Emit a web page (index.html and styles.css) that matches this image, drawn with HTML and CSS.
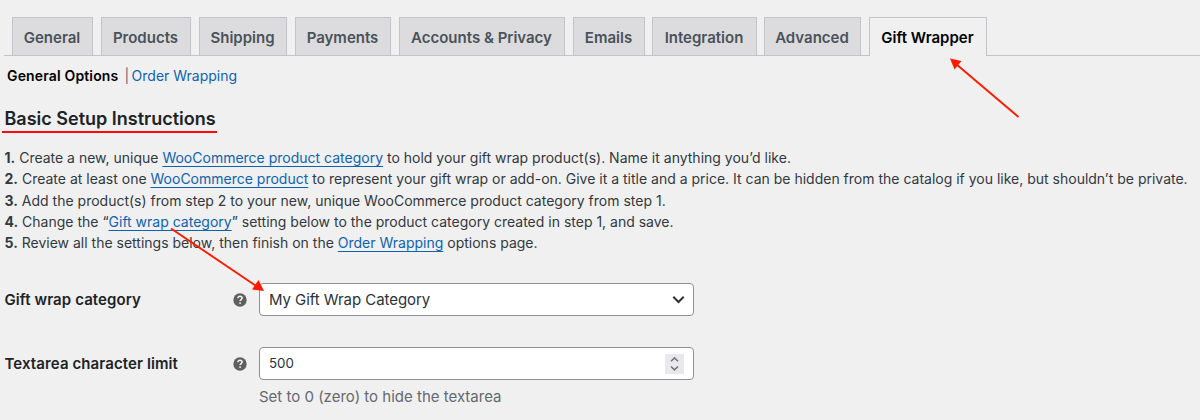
FILE: index.html
```html
<!DOCTYPE html>
<html lang="en">
<head>
<meta charset="utf-8">
<title>Gift Wrapper settings</title>
<link rel="stylesheet" href="styles.css">
</head>
<body>
<nav class="tabs">
  <a class="tab"><span>General</span></a>
  <a class="tab"><span>Products</span></a>
  <a class="tab"><span>Shipping</span></a>
  <a class="tab"><span>Payments</span></a>
  <a class="tab"><span>Accounts &amp; Privacy</span></a>
  <a class="tab tight"><span>Emails</span></a>
  <a class="tab tight"><span>Integration</span></a>
  <a class="tab"><span>Advanced</span></a>
  <a class="tab active"><span>Gift Wrapper</span></a>
</nav>
<main>
  <div class="sections"><b>General Options</b><span class="divider">|</span><a>Order Wrapping</a></div>
  <h2><span>Basic Setup Instructions</span></h2>
  <div class="steps">
    <div class="step"><b>1.</b> Create a new, unique <a>WooCommerce product category</a> to hold your gift wrap product(s). Name it anything you’d like.</div>
    <div class="step"><b>2.</b> Create at least one <a>WooCommerce product</a> to represent your gift wrap or add-on. Give it a title and a price. It can be hidden from the catalog if you like, but shouldn’t be private.</div>
    <div class="step"><b>3.</b> Add the product(s) from step 2 to your new, unique WooCommerce product category from step 1.</div>
    <div class="step"><b>4.</b> Change the “<a>Gift wrap category</a>” setting below to the product category created in step 1, and save.</div>
    <div class="step"><b>5.</b> Review all the settings below, then finish on the <a>Order Wrapping</a> options page.</div>
  </div>
  <div class="row">
    <label>Gift wrap category</label>
    <svg class="help" viewBox="0 0 14 14"><circle cx="7" cy="7" r="6.7" fill="#5f5f5f"/><path d="M4.9 5.3C4.9 4 5.8 3.3 7 3.3s2.1.7 2.1 1.8c0 1.4-2 1.5-2 3" fill="none" stroke="#f4f4f4" stroke-width="1.5"/><rect x="6.3" y="9.3" width="1.6" height="1.6" fill="#f4f4f4"/></svg>
    <div class="field select"><span>My Gift Wrap Category</span><svg width="14" height="9" viewBox="0 0 14 9"><path d="M2.3 1.8 7.5 7l5.2-5.2" fill="none" stroke="#2c3338" stroke-width="2"/></svg></div>
  </div>
  <div class="row second">
    <label>Textarea character limit</label>
    <svg class="help" viewBox="0 0 14 14"><circle cx="7" cy="7" r="6.7" fill="#5f5f5f"/><path d="M4.9 5.3C4.9 4 5.8 3.3 7 3.3s2.1.7 2.1 1.8c0 1.4-2 1.5-2 3" fill="none" stroke="#f4f4f4" stroke-width="1.5"/><rect x="6.3" y="9.3" width="1.6" height="1.6" fill="#f4f4f4"/></svg>
    <div class="field number"><span>500</span><svg width="19" height="20" viewBox="0 0 19 20"><rect width="19" height="20" fill="#e9e9ed"/><path d="M6 7.3 9.5 3.9 13 7.3M6 12.5 9.5 15.9 13 12.5" fill="none" stroke="#74747c" stroke-width="1.5"/></svg></div>
  </div>
  <p class="hint">Set to 0 (zero) to hide the textarea</p>
</main>
<svg class="arrows" width="1200" height="420" viewBox="0 0 1200 420">
  <g stroke="#ff1a00" stroke-width="1.9"><path d="M1018.500 117 956 64"/><path d="M171 228.500 257 286.500"/></g>
  <g fill="#ff1a00"><path d="M950 58.500 961.500 61 954.500 69.500Z"/><path d="M264 291 252 289.500 258.500 280Z"/></g>
</svg>
</body>
</html>
```
FILE: styles.css
```css
* { box-sizing: border-box; }
body {
  margin: 0;
  width: 1200px;
  height: 420px;
  overflow: hidden;
  background: #f0f0f1;
  color: #32393f;
  font: 14px/21px Inter, sans-serif;
}
.tabs {
  display: grid;
  grid-template-columns: 89px 98px 96px 104px 174px 79px 112px 105px 118px;
  height: 56px;
  margin-left: 4px;
  padding: 17px 0 0 8px;
  border-bottom: 1px solid #c3c4c7;
}
.tab {
  display: flex;
  align-items: center;
  justify-content: center;
  height: 38px;
  margin-right: 8px;
  padding-top: 1px;
  border: 1px solid #c3c4c7;
  border-bottom: 0;
  background: #dcdcde;
  color: #4a525a;
  font-size: 15px;
  font-weight: 600;
  white-space: nowrap;
}
.tab span { margin-left: -1px; }
.tight { margin-right: 7px; }
.active {
  height: 39px;
  margin-right: 0;
  padding-bottom: 1px;
  background: #f0f0f1;
  color: #000;
}
main { padding: 8px 5px 0; }
.sections {
  display: flex;
  height: 22px;
  padding-left: 2px;
  align-items: center;
}
.sections b { color: #000; font-weight: 600; letter-spacing: 0.15px; }
.divider { margin: 0 2.5px 0 6px; color: #646970; }
.sections a, .steps a { color: #0e63b0; }
.steps { margin-left: -0.5px; padding-top: 14px; }
.steps a { text-decoration: underline; text-underline-offset: 3px; text-decoration-thickness: 1px; }
h2 {
  width: 215px;
  height: 27px;
  margin: 20px 0 0 -3px;
  padding: 1px 0 0 2.5px;
  border-bottom: 2px solid #fb0d0d;
  color: #1d2327;
  font-size: 18px;
  font-weight: 600;
  line-height: 24px;
  white-space: nowrap;
}
.step { height: 21.3px; white-space: nowrap; }
.step b { font-weight: 700; }
.row {
  display: grid;
  grid-template-columns: 228px 26px 435px;
  align-items: center;
  height: 32px;
  margin-top: 30px;
}
.second { margin-top: 32px; }
label {
  margin-left: -0.5px;
  color: #1d2327;
  font-size: 15px;
  font-weight: 600;
  letter-spacing: 0.1px;
}
.help { width: 14px; height: 14px; }
.field {
  display: flex;
  align-items: center;
  justify-content: space-between;
  height: 33px;
  padding: 0 8px 0 9px;
  border: 1px solid #8c8f94;
  border-radius: 4px;
  background: #fff;
  color: #2c3338;
  font-size: 15px;
}
.select { letter-spacing: -0.06px; }
.number { padding-right: 9px; font-size: 13.3px; }
.hint { margin: 8px 0 0 254px; color: #646970; font-size: 15px; line-height: 20px; }
.arrows { position: absolute; inset: 0; pointer-events: none; fill: none; }
```
